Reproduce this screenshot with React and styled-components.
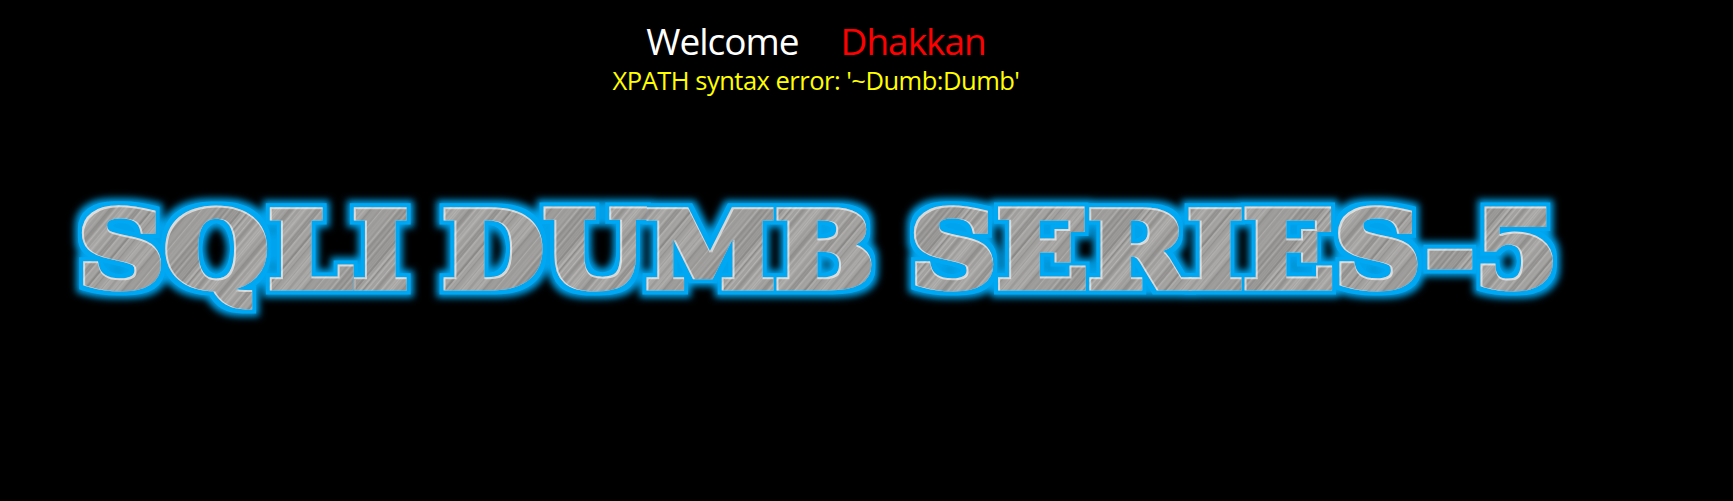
import React from 'react'
import styled, { createGlobalStyle } from 'styled-components'

const Global = createGlobalStyle`
html, body {
  margin: 0;
  background: #000;
}
`

const Page = styled.div`
  width: 1733px;
  height: 501px;
  overflow: hidden;
  background: #000;
`

const Header = styled.div`
  width: 1632px;
  padding-top: 17px;
  text-align: center;
  font-family: "Open Sans", "Noto Sans", sans-serif;
`

const Greeting = styled.div`
  display: flex;
  justify-content: center;
  gap: 42px;
  font-size: 37px;
  line-height: 47px;
  letter-spacing: -1px;
`

const Word = styled.span`
  color: ${(p) => p.$color};
`

const Message = styled.div`
  font-size: 25.5px;
  line-height: 32px;
  letter-spacing: -0.5px;
  color: #ffff00;
`

const Banner = styled.svg`
  display: block;
  margin-top: 89px;
  width: 1733px;
  height: 150px;
`

const BannerText = styled.text`
  font-family: "DejaVu Serif", serif;
  font-weight: 700;
  font-size: 104px;
`

// brushed metal streaks for the banner letters, uneven on purpose
const streaks = Array.from({ length: 60 }, (_, i) => ({
  y: i * 2.3,
  grey: 115 + ((i * i * 37 + i * 11) % 95),
  w: 0.6 + ((i * i * 13) % 7) * 0.22,
}))

const words = [
  { text: 'SQLI', x: 78, len: 330 },
  { text: 'DUMB', x: 442, len: 432 },
  { text: 'SERIES-5', x: 910, len: 648 },
]

export default function App() {
  return (
    <Page>
      <Global />
      <Header>
        <Greeting>
          <Word $color="#ffffff">Welcome</Word>
          <Word $color="#ff0000">Dhakkan</Word>
        </Greeting>
        <Message>XPATH syntax error: '~Dumb:Dumb'</Message>
      </Header>
      <Banner viewBox="0 0 1733 150">
        <defs>
          <pattern id="metal" width="138" height="138" patternUnits="userSpaceOnUse" patternTransform="rotate(-50)">
            <rect width="138" height="138" fill="#9f9d9b" />
            {streaks.map((s) => (
              <rect key={s.y} x="0" y={s.y} width="138" height={s.w} fill={`rgb(${s.grey},${s.grey},${s.grey})`} opacity="0.5" />
            ))}
          </pattern>
          <filter id="glow" x="-5%" y="-30%" width="110%" height="160%" colorInterpolationFilters="sRGB">
            <feMorphology in="SourceAlpha" operator="dilate" radius="4" result="band" />
            <feMorphology in="SourceAlpha" operator="dilate" radius="7" result="fat" />
            <feGaussianBlur in="fat" stdDeviation="3.5" result="soft" />
            <feFlood floodColor="#00a4ee" />
            <feComposite in2="soft" operator="in" result="halo" />
            <feFlood floodColor="#00a8f4" />
            <feComposite in2="band" operator="in" result="solid" />
            <feMorphology in="SourceAlpha" operator="erode" radius="1" result="thin" />
            <feOffset in="thin" dx="1" dy="1" result="moved" />
            <feFlood floodColor="#ffffff" floodOpacity="0.6" />
            <feComposite in2="SourceAlpha" operator="in" result="white" />
            <feComposite in="white" in2="moved" operator="out" result="edge" />
            <feMerge>
              <feMergeNode in="halo" />
              <feMergeNode in="solid" />
              <feMergeNode in="SourceGraphic" />
              <feMergeNode in="edge" />
            </feMerge>
          </filter>
        </defs>
        <g filter="url(#glow)">
          {words.map((w) => (
            <BannerText
              key={w.text}
              x={w.x}
              y="102"
              textLength={w.len}
              lengthAdjust="spacingAndGlyphs"
              fill="url(#metal)"
              stroke="url(#metal)"
              strokeWidth="7"
            >
              {w.text}
            </BannerText>
          ))}
        </g>
      </Banner>
    </Page>
  )
}
